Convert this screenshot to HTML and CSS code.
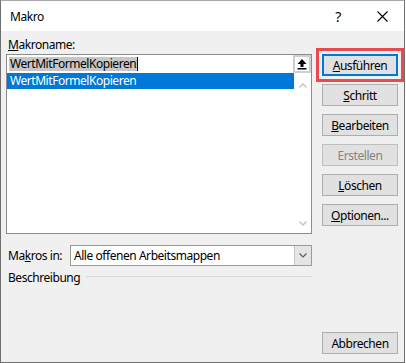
FILE: index.html
```html
<!DOCTYPE html>
<html lang="de">
<head>
	<meta charset="UTF-8">
	<title>Makro</title>
	<link rel="stylesheet" href="styles.css">
</head>
<body>

	<div class="dialog">
		<div class="titlebar">
			<span class="title">Makro</span>
			<span class="help">?</span>
			<svg class="close" width="11" height="11" viewBox="0 0 11 11"><path d="M0.5 0.5L10.5 10.5M10.5 0.5L0.5 10.5" stroke="#000" stroke-width="1.1" fill="none"/></svg>
		</div>

		<div class="content">
			<div class="left">
				<div class="lbl"><u>M</u>akroname:</div>
				<div class="field">
					<div class="name-row">
						<div class="name-input"><span class="sel">WertMitFormelKopieren</span><span class="caret"></span></div>
						<div class="pick">
							<svg width="10" height="11" viewBox="0 0 10 11"><path d="M5 0L9.5 5H6.5V8H3.5V5H0.5Z" fill="#000"/><rect x="0.5" y="9" width="9" height="1.5" fill="#000"/></svg>
						</div>
					</div>
					<div class="list">
						<div class="items">
							<div class="item active">WertMitFormelKopieren</div>
						</div>
						<div class="scroll">
							<svg width="8" height="5" viewBox="0 0 8 5"><path d="M0.5 4.5L4 1L7.5 4.5" stroke="#c2c2c2" stroke-width="1.4" fill="none"/></svg>
							<svg width="8" height="5" viewBox="0 0 8 5"><path d="M0.5 0.5L4 4L7.5 0.5" stroke="#c2c2c2" stroke-width="1.4" fill="none"/></svg>
						</div>
					</div>
				</div>

				<div class="in-row">
					<span class="in-lbl">Ma<u>k</u>ros in:</span>
					<div class="combo">
						<span class="combo-text">Alle offenen Arbeitsmappen</span>
						<span class="drop"><svg width="8" height="5" viewBox="0 0 8 5"><path d="M0.5 0.5L4 4L7.5 0.5" stroke="#5a5a5a" stroke-width="1.1" fill="none"/></svg></span>
					</div>
				</div>

				<div class="desc">
					<span>Beschreibung</span>
					<span class="rule"></span>
				</div>
			</div>

			<div class="right">
				<button class="btn default"><u>A</u>usführen</button>
				<button class="btn"><u>S</u>chritt</button>
				<button class="btn"><u>B</u>earbeiten</button>
				<button class="btn disabled">Erstellen</button>
				<button class="btn"><u>L</u>öschen</button>
				<button class="btn"><u>O</u>ptionen...</button>
				<button class="btn cancel">Abbrechen</button>
			</div>
		</div>
	</div>

</body>
</html>
```

FILE: styles.css
```css
body {
	margin: 0;
	width: 406px;
	height: 363px;
	background: #fff;
	font-family: 'Segoe UI', 'Noto Sans', sans-serif;
	font-size: 12px;
	letter-spacing: -0.45px;
	color: #000;
}
.dialog {
	box-sizing: border-box;
	width: 405px;
	height: 363px;
	border: 1px solid #6f6f6f;
	border-top-color: #a8a8a8;
	display: flex;
	flex-direction: column;
}
.titlebar {
	height: 30px;
	flex-shrink: 0;
	display: flex;
	align-items: center;
	padding-left: 9px;
	background: #fff;
}
.title {
	flex: 1;
	font-size: 12px;
}
.help {
	font-size: 14px;
	margin-right: 36px;
}
.close {
	margin-right: 16px;
}
.content {
	flex: 1;
	display: flex;
	gap: 10px;
	padding: 6px 6px 8px 5px;
	background: #f0f0f0;
}
.left {
	width: 306px;
	display: flex;
	flex-direction: column;
}
.lbl {
	height: 16px;
	line-height: 16px;
	padding-left: 2px;
	margin-bottom: 1px;
}
.field {
	box-sizing: border-box;
	height: 180px;
	border: 1px solid #8c8c8c;
	background: #fff;
	display: flex;
	flex-direction: column;
}
.name-row {
	height: 18px;
	display: flex;
}
.name-input {
	flex: 1;
	display: flex;
	align-items: center;
	padding-left: 2px;
}
.sel {
	background: #c6c6c6;
	height: 14px;
	line-height: 14px;
	padding: 0 1px;
}
.caret {
	width: 1px;
	height: 14px;
	background: #000;
}
.pick {
	box-sizing: border-box;
	width: 18px;
	height: 18px;
	border: 2px solid #cfcfcf;
	background: #fff;
	display: flex;
	align-items: center;
	justify-content: center;
}
.list {
	flex: 1;
	display: flex;
}
.items {
	flex: 1;
}
.item {
	height: 16px;
	line-height: 16px;
	padding-left: 3px;
}
.item.active {
	background: #0078d7;
	color: #fff;
}
.scroll {
	width: 17px;
	display: flex;
	flex-direction: column;
	justify-content: space-between;
	align-items: center;
	padding: 10px 0 7px;
}
.in-row {
	margin-top: 11px;
	display: flex;
	align-items: center;
}
.in-lbl {
	width: 62px;
	padding-left: 2px;
}
.combo {
	box-sizing: border-box;
	flex: 1;
	height: 21px;
	border: 1px solid #9a9a9a;
	background: #fff;
	display: flex;
}
.combo-text {
	flex: 1;
	padding-left: 3px;
	line-height: 19px;
}
.drop {
	width: 16px;
	background: #e5e5e5;
	border-left: 1px solid #c4c4c4;
	display: flex;
	align-items: center;
	justify-content: center;
}
.desc {
	margin-top: 3px;
	display: flex;
	align-items: center;
	padding-left: 2px;
	height: 16px;
}
.rule {
	flex: 1;
	height: 1px;
	background: #d8d8d8;
	margin: -2px 0 0 6px;
}
.right {
	width: 76px;
	display: flex;
	flex-direction: column;
	gap: 8px;
	padding-top: 17px;
}
.btn {
	box-sizing: border-box;
	height: 22px;
	padding: 0;
	border: 1px solid #adadad;
	background: #e1e1e1;
	font-family: inherit;
	font-size: 12px;
	letter-spacing: inherit;
	color: #000;
}
.btn.default {
	border: 2px solid #0078d7;
	outline: 3px solid #e84a50;
	outline-offset: 3px;
}
.btn.disabled {
	color: #838383;
	border-color: #bfbfbf;
}
.btn.cancel {
	margin-top: auto;
}
```
